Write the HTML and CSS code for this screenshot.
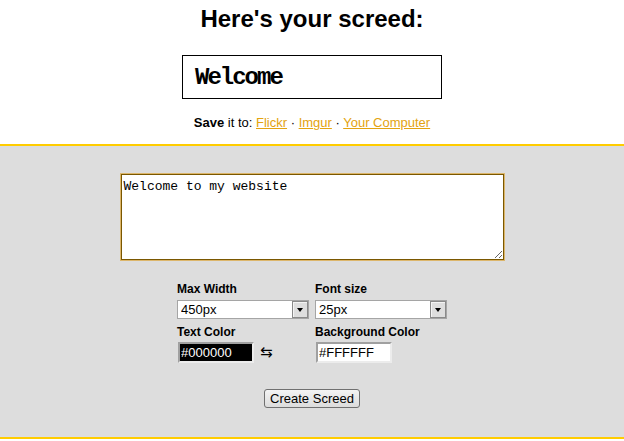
FILE: index.html
```
<!DOCTYPE html>
<html lang="en">
<head>
    <meta charset="UTF-8">
    <title>Screed</title>
    <link rel="stylesheet" href="styles.css">
</head>
<body>
    <div id="result">
        <h1>Here's your screed:</h1>
        <div class="screed">Welcome</div>
        <p class="save"><strong>Save</strong> it to: <a href="#">Flickr</a> &middot; <a href="#">Imgur</a> &middot; <a href="#">Your Computer</a></p>
    </div>
    <div id="editor">
        <textarea id="screed-text">Welcome to my website</textarea>
        <div class="options">
            <div class="field">
                <label>Max Width</label>
                <div class="select">
                    <select><option>450px</option></select>
                    <span class="select-arrow"></span>
                </div>
            </div>
            <div class="field">
                <label>Font size</label>
                <div class="select">
                    <select><option>25px</option></select>
                    <span class="select-arrow"></span>
                </div>
            </div>
            <div class="field">
                <label>Text Color</label>
                <div class="color-row">
                    <input type="text" class="color-input dark" value="#000000">
                    <span class="swap">&#8646;</span>
                </div>
            </div>
            <div class="field">
                <label>Background Color</label>
                <div class="color-row">
                    <input type="text" class="color-input" value="#FFFFFF">
                </div>
            </div>
        </div>
        <button class="button">Create Screed</button>
    </div>
</body>
</html>
```

FILE: styles.css
```
body {
    font-family: 'Liberation Sans', Arial, sans-serif;
    margin: 0;
    background: #fff;
    color: #000;
}
#result {
    text-align: center;
    padding-top: 5px;
}
h1 {
    font-size: 24px;
    line-height: 28px;
    margin: 0;
}
.screed {
    width: 260px;
    height: 44px;
    box-sizing: border-box;
    margin: 22px auto 0;
    border: 1px solid #000;
    padding: 2px 0 0 12px;
    text-align: left;
    font-family: 'Liberation Mono', 'Courier New', monospace;
    font-weight: bold;
    font-size: 24px;
    letter-spacing: -2px;
    line-height: 40px;
}
.save {
    font-size: 13px;
    line-height: 16px;
    margin: 16px 0 0;
    padding-bottom: 13px;
}
.save a {
    color: #e3a30f;
}
#editor {
    background: #dddddd;
    border-top: 2px solid #ffcc00;
    border-bottom: 2px solid #ffcc00;
    padding: 28px 0 29px;
    text-align: center;
}
#screed-text {
    display: block;
    width: 383px;
    height: 86px;
    box-sizing: border-box;
    margin: 0 auto;
    border: 1px solid #7a5700;
    box-shadow: 0 0 0 1px #dcb66b;
    padding: 4px 2px;
    font-family: 'Liberation Mono', 'Courier New', monospace;
    font-size: 13px;
    outline: none;
}
.options {
    width: 270px;
    margin: 22px auto 0;
    display: grid;
    grid-template-columns: 132px 132px;
    column-gap: 6px;
    row-gap: 6px;
    text-align: left;
}
.field label {
    display: block;
    font-size: 12px;
    font-weight: bold;
    line-height: 15px;
    margin-bottom: 3px;
}
.field:nth-child(n+3) label {
    margin-bottom: 2px;
}
.select {
    position: relative;
    height: 19px;
}
.select select {
    appearance: none;
    -webkit-appearance: none;
    width: 100%;
    height: 19px;
    box-sizing: border-box;
    border: 1px solid #a5a5a5;
    border-radius: 0;
    background: #fff;
    padding: 0 0 0 3px;
    font-family: 'Liberation Sans', Arial, sans-serif;
    font-size: 13px;
    color: #000;
}
.select-arrow {
    position: absolute;
    top: 1px;
    right: 1px;
    width: 16px;
    height: 17px;
    box-sizing: border-box;
    background: #dedede;
    border: 1px solid #8a8a8a;
    box-shadow: inset 1px 1px 0 #f4f4f4;
}
.select-arrow::after {
    content: "";
    position: absolute;
    left: 4px;
    top: 6px;
    border-left: 3px solid transparent;
    border-right: 3px solid transparent;
    border-top: 4px solid #000;
}
.color-row {
    display: flex;
    align-items: center;
    gap: 6px;
}
.color-input {
    width: 76px;
    height: 21px;
    box-sizing: border-box;
    border: 2px solid;
    border-color: #a0a0a0 #ececec #ececec #a0a0a0;
    padding: 0 1px;
    font-family: 'Liberation Sans', Arial, sans-serif;
    font-size: 13px;
    background: #fff;
    color: #000;
    margin-left: 1px;
}
.color-input.dark {
    background: #000;
    color: #fff;
}
.swap {
    font-family: 'DejaVu Sans', sans-serif;
    font-size: 15px;
    line-height: 15px;
    margin-top: -1px;
}
.button {
    display: block;
    margin: 26px auto 0;
    height: 19px;
    padding: 0 5px;
    font-family: 'Liberation Sans', Arial, sans-serif;
    font-size: 13px;
    color: #000;
    background: linear-gradient(#f4f4f4, #dcdcdc);
    border: 1px solid #707070;
    border-radius: 3px;
}
```
